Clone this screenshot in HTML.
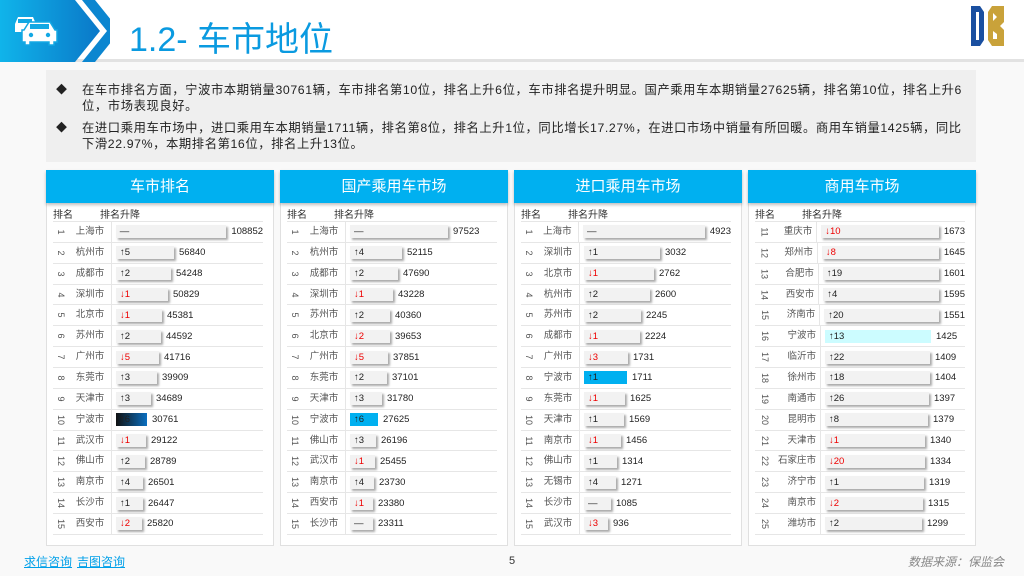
<!DOCTYPE html><html><head><meta charset="utf-8"><style>
*{margin:0;padding:0;box-sizing:border-box}
body{width:1024px;height:576px;overflow:hidden;background:#f9f9f9;font-family:"Liberation Sans","Noto Sans CJK SC",sans-serif;position:relative;color:#333}
.hdr{position:absolute;left:0;top:0;width:1024px;height:62px;background:#fff;border-bottom:3px solid #e2e2e2}
.title{position:absolute;left:129px;top:12px;font-size:34px;color:#0a9ae0;letter-spacing:0px}
.box{position:absolute;left:46px;top:70px;width:930px;height:92px;background:#efefef}
.box p{position:absolute;left:36px;font-size:12.3px;line-height:16px;width:890px;color:#222;letter-spacing:0.6px}
.box i{position:absolute;left:-26px;top:0;font-style:normal;font-size:11px}
.pn{position:absolute;top:170px;width:228px;height:376px;background:#fff;border:1px solid #e0e0e0}
.pt{position:absolute;left:-1px;top:-1px;width:228px;height:33px;background:#00b0f0;color:#fff;font-size:15px;text-align:center;line-height:33px;box-shadow:0 2px 3px rgba(0,0,0,.25)}
.th{position:absolute;top:35px;left:6px;font-size:10px;color:#333}
.tb{position:absolute;left:6px;top:50px;width:210px;border-top:1px solid #e6e6e6}
.r{height:20.86px;border-bottom:1px solid #e6e6e6;display:flex;align-items:center;font-size:9.5px;position:relative}
.n{width:16px;text-align:center;display:inline-block;transform:rotate(90deg);font-size:9px;color:#555;font-style:normal}
.c{width:43px;text-align:center;color:#555;font-size:9.5px;border-right:1px solid #e6e6e6;height:100%;line-height:20px;white-space:nowrap}
.p4 .n{width:20px}.p4 .c{width:46px;text-align:right;padding-right:4px}
.b{height:13px;background:#f2f2f2;box-shadow:2px 2px 2px #aaa;margin-left:4px;padding-left:4px;font-weight:normal;line-height:13px;font-size:9.5px;white-space:nowrap;color:#222}
.d{color:#e00}
.v{margin-left:5px;color:#222}
.ft{position:absolute;top:553px;font-size:12px}
</style></head><body>
<div class="hdr">
<svg width="110" height="62" style="position:absolute;left:0;top:0">
<defs><linearGradient id="g" x1="0" x2="1"><stop offset="0" stop-color="#10b4ea"/><stop offset="1" stop-color="#0a78c8"/></linearGradient></defs>
<polygon points="0,0 75,0 100,31 75,62 0,62" fill="url(#g)"/>
<polygon points="82,0 95,0 120,31 95,62 82,62 107,31" fill="#0b86d0"/>
<g fill="#fff">
<path d="M15 24 l3 -7 h15 l3 7 h2 v8 h-23 v-8z"/>
<rect x="18" y="19" width="14" height="4" fill="#13a8e4"/>
<path d="M24 30 l5 -8 h21 l5 8 h2 v12 h-3 v3 h-5 v-3 h-19 v3 h-5 v-3 h-3 v-12z" stroke="#13a8e4" stroke-width="1.5"/>
<rect x="30" y="24" width="19" height="5" fill="#13a8e4"/>
<circle cx="31" cy="35" r="2.2" fill="#13a8e4"/><circle cx="48" cy="35" r="2.2" fill="#13a8e4"/>
</g></svg>
<div class="title">1.2- 车市地位</div>
<svg width="36" height="44" viewBox="0 0 36 42" style="position:absolute;left:970px;top:4px">
<path d="M1 1 h9 l4 6 v28 l-4 6 h-9z M6 7 v28 h3 v-28z" fill="#1a4fa0" fill-rule="evenodd"/>
<path d="M18 7 l4 -6 h12 v16 l-4 4 l4 4 v16 h-12 l-4 -6z M23 8 v8 l4 -4z M23 26 v8 h4 v-5z" fill="#c9a23a" fill-rule="evenodd"/>
</svg>
</div>
<div class="box">
<p style="top:12px"><i>◆</i>在车市排名方面，宁波市本期销量30761辆，车市排名第10位，排名上升6位，车市排名提升明显。国产乘用车本期销量27625辆，排名第10位，排名上升6位，市场表现良好。</p>
<p style="top:50px"><i>◆</i>在进口乘用车市场中，进口乘用车本期销量1711辆，排名第8位，排名上升1位，同比增长17.27%，在进口市场中销量有所回暖。商用车销量1425辆，同比下滑22.97%，本期排名第16位，排名上升13位。</p>
</div>

<div class="pn" style="left:46px"><div class="pt">车市排名</div><div class="th">排名<span style="margin-left:27px">排名升降</span></div><div class="tb">
<div class="r"><i class="n">1</i><span class="c">上海市</span><b class="b" style="width:111px">—</b><span class="v">108852</span></div>
<div class="r"><i class="n">2</i><span class="c">杭州市</span><b class="b" style="width:58px">↑5</b><span class="v">56840</span></div>
<div class="r"><i class="n">3</i><span class="c">成都市</span><b class="b" style="width:55px">↑2</b><span class="v">54248</span></div>
<div class="r"><i class="n">4</i><span class="c">深圳市</span><b class="b d" style="width:52px">↓1</b><span class="v">50829</span></div>
<div class="r"><i class="n">5</i><span class="c">北京市</span><b class="b d" style="width:46px">↓1</b><span class="v">45381</span></div>
<div class="r"><i class="n">6</i><span class="c">苏州市</span><b class="b" style="width:45px">↑2</b><span class="v">44592</span></div>
<div class="r"><i class="n">7</i><span class="c">广州市</span><b class="b d" style="width:43px">↓5</b><span class="v">41716</span></div>
<div class="r"><i class="n">8</i><span class="c">东莞市</span><b class="b" style="width:41px">↑3</b><span class="v">39909</span></div>
<div class="r"><i class="n">9</i><span class="c">天津市</span><b class="b" style="width:35px">↑3</b><span class="v">34689</span></div>
<div class="r"><i class="n">10</i><span class="c">宁波市</span><b class="b" style="width:31px;background:linear-gradient(90deg,#111,#0a6fc0);box-shadow:none">↑6</b><span class="v">30761</span></div>
<div class="r"><i class="n">11</i><span class="c">武汉市</span><b class="b d" style="width:30px">↓1</b><span class="v">29122</span></div>
<div class="r"><i class="n">12</i><span class="c">佛山市</span><b class="b" style="width:29px">↑2</b><span class="v">28789</span></div>
<div class="r"><i class="n">13</i><span class="c">南京市</span><b class="b" style="width:27px">↑4</b><span class="v">26501</span></div>
<div class="r"><i class="n">14</i><span class="c">长沙市</span><b class="b" style="width:27px">↑1</b><span class="v">26447</span></div>
<div class="r"><i class="n">15</i><span class="c">西安市</span><b class="b d" style="width:26px">↓2</b><span class="v">25820</span></div>
</div></div>

<div class="pn" style="left:280px"><div class="pt">国产乘用车市场</div><div class="th">排名<span style="margin-left:27px">排名升降</span></div><div class="tb">
<div class="r"><i class="n">1</i><span class="c">上海市</span><b class="b" style="width:98px">—</b><span class="v">97523</span></div>
<div class="r"><i class="n">2</i><span class="c">杭州市</span><b class="b" style="width:52px">↑4</b><span class="v">52115</span></div>
<div class="r"><i class="n">3</i><span class="c">成都市</span><b class="b" style="width:48px">↑2</b><span class="v">47690</span></div>
<div class="r"><i class="n">4</i><span class="c">深圳市</span><b class="b d" style="width:43px">↓1</b><span class="v">43228</span></div>
<div class="r"><i class="n">5</i><span class="c">苏州市</span><b class="b" style="width:40px">↑2</b><span class="v">40360</span></div>
<div class="r"><i class="n">6</i><span class="c">北京市</span><b class="b d" style="width:40px">↓2</b><span class="v">39653</span></div>
<div class="r"><i class="n">7</i><span class="c">广州市</span><b class="b d" style="width:38px">↓5</b><span class="v">37851</span></div>
<div class="r"><i class="n">8</i><span class="c">东莞市</span><b class="b" style="width:37px">↑2</b><span class="v">37101</span></div>
<div class="r"><i class="n">9</i><span class="c">天津市</span><b class="b" style="width:32px">↑3</b><span class="v">31780</span></div>
<div class="r"><i class="n">10</i><span class="c">宁波市</span><b class="b" style="width:28px;background:#00b0f0;box-shadow:none">↑6</b><span class="v">27625</span></div>
<div class="r"><i class="n">11</i><span class="c">佛山市</span><b class="b" style="width:26px">↑3</b><span class="v">26196</span></div>
<div class="r"><i class="n">12</i><span class="c">武汉市</span><b class="b d" style="width:25px">↓1</b><span class="v">25455</span></div>
<div class="r"><i class="n">13</i><span class="c">南京市</span><b class="b" style="width:24px">↑4</b><span class="v">23730</span></div>
<div class="r"><i class="n">14</i><span class="c">西安市</span><b class="b d" style="width:23px">↓1</b><span class="v">23380</span></div>
<div class="r"><i class="n">15</i><span class="c">长沙市</span><b class="b" style="width:23px">—</b><span class="v">23311</span></div>
</div></div>

<div class="pn" style="left:514px"><div class="pt">进口乘用车市场</div><div class="th">排名<span style="margin-left:27px">排名升降</span></div><div class="tb">
<div class="r"><i class="n">1</i><span class="c">上海市</span><b class="b" style="width:124px">—</b><span class="v">4923</span></div>
<div class="r"><i class="n">2</i><span class="c">深圳市</span><b class="b" style="width:76px">↑1</b><span class="v">3032</span></div>
<div class="r"><i class="n">3</i><span class="c">北京市</span><b class="b d" style="width:70px">↓1</b><span class="v">2762</span></div>
<div class="r"><i class="n">4</i><span class="c">杭州市</span><b class="b" style="width:66px">↑2</b><span class="v">2600</span></div>
<div class="r"><i class="n">5</i><span class="c">苏州市</span><b class="b" style="width:57px">↑2</b><span class="v">2245</span></div>
<div class="r"><i class="n">6</i><span class="c">成都市</span><b class="b d" style="width:56px">↓1</b><span class="v">2224</span></div>
<div class="r"><i class="n">7</i><span class="c">广州市</span><b class="b d" style="width:44px">↓3</b><span class="v">1731</span></div>
<div class="r"><i class="n">8</i><span class="c">宁波市</span><b class="b" style="width:43px;background:#00b0f0;box-shadow:none">↑1</b><span class="v">1711</span></div>
<div class="r"><i class="n">9</i><span class="c">东莞市</span><b class="b d" style="width:41px">↓1</b><span class="v">1625</span></div>
<div class="r"><i class="n">10</i><span class="c">天津市</span><b class="b" style="width:40px">↑1</b><span class="v">1569</span></div>
<div class="r"><i class="n">11</i><span class="c">南京市</span><b class="b d" style="width:37px">↓1</b><span class="v">1456</span></div>
<div class="r"><i class="n">12</i><span class="c">佛山市</span><b class="b" style="width:33px">↑1</b><span class="v">1314</span></div>
<div class="r"><i class="n">13</i><span class="c">无锡市</span><b class="b" style="width:32px">↑4</b><span class="v">1271</span></div>
<div class="r"><i class="n">14</i><span class="c">长沙市</span><b class="b" style="width:27px">—</b><span class="v">1085</span></div>
<div class="r"><i class="n">15</i><span class="c">武汉市</span><b class="b d" style="width:24px">↓3</b><span class="v">936</span></div>
</div></div>

<div class="pn p4" style="left:748px"><div class="pt">商用车市场</div><div class="th">排名<span style="margin-left:27px">排名升降</span></div><div class="tb">
<div class="r"><i class="n">11</i><span class="c">重庆市</span><b class="b d" style="width:125px">↓10</b><span class="v">1673</span></div>
<div class="r"><i class="n">12</i><span class="c">郑州市</span><b class="b d" style="width:123px">↓8</b><span class="v">1645</span></div>
<div class="r"><i class="n">13</i><span class="c">合肥市</span><b class="b" style="width:120px">↑19</b><span class="v">1601</span></div>
<div class="r"><i class="n">14</i><span class="c">西安市</span><b class="b" style="width:119px">↑4</b><span class="v">1595</span></div>
<div class="r"><i class="n">15</i><span class="c">济南市</span><b class="b" style="width:116px">↑20</b><span class="v">1551</span></div>
<div class="r"><i class="n">16</i><span class="c">宁波市</span><b class="b" style="width:106px;background:#ccfcff;box-shadow:none">↑13</b><span class="v">1425</span></div>
<div class="r"><i class="n">17</i><span class="c">临沂市</span><b class="b" style="width:105px">↑22</b><span class="v">1409</span></div>
<div class="r"><i class="n">18</i><span class="c">徐州市</span><b class="b" style="width:105px">↑18</b><span class="v">1404</span></div>
<div class="r"><i class="n">19</i><span class="c">南通市</span><b class="b" style="width:104px">↑26</b><span class="v">1397</span></div>
<div class="r"><i class="n">20</i><span class="c">昆明市</span><b class="b" style="width:103px">↑8</b><span class="v">1379</span></div>
<div class="r"><i class="n">21</i><span class="c">天津市</span><b class="b d" style="width:100px">↓1</b><span class="v">1340</span></div>
<div class="r"><i class="n">22</i><span class="c">石家庄市</span><b class="b d" style="width:100px">↓20</b><span class="v">1334</span></div>
<div class="r"><i class="n">23</i><span class="c">济宁市</span><b class="b" style="width:99px">↑1</b><span class="v">1319</span></div>
<div class="r"><i class="n">24</i><span class="c">南京市</span><b class="b d" style="width:98px">↓2</b><span class="v">1315</span></div>
<div class="r"><i class="n">25</i><span class="c">潍坊市</span><b class="b" style="width:97px">↑2</b><span class="v">1299</span></div>
</div></div>

<div class="ft" style="left:24px;color:#00a0e9;text-decoration:underline">求信咨询</div>
<div class="ft" style="left:77px;color:#00a0e9;text-decoration:underline">吉图咨询</div>
<div class="ft" style="left:509px;color:#333;font-size:11px;top:555px">5</div>
<div class="ft" style="left:908px;color:#888;font-style:italic">数据来源：保监会</div>
</body></html>
